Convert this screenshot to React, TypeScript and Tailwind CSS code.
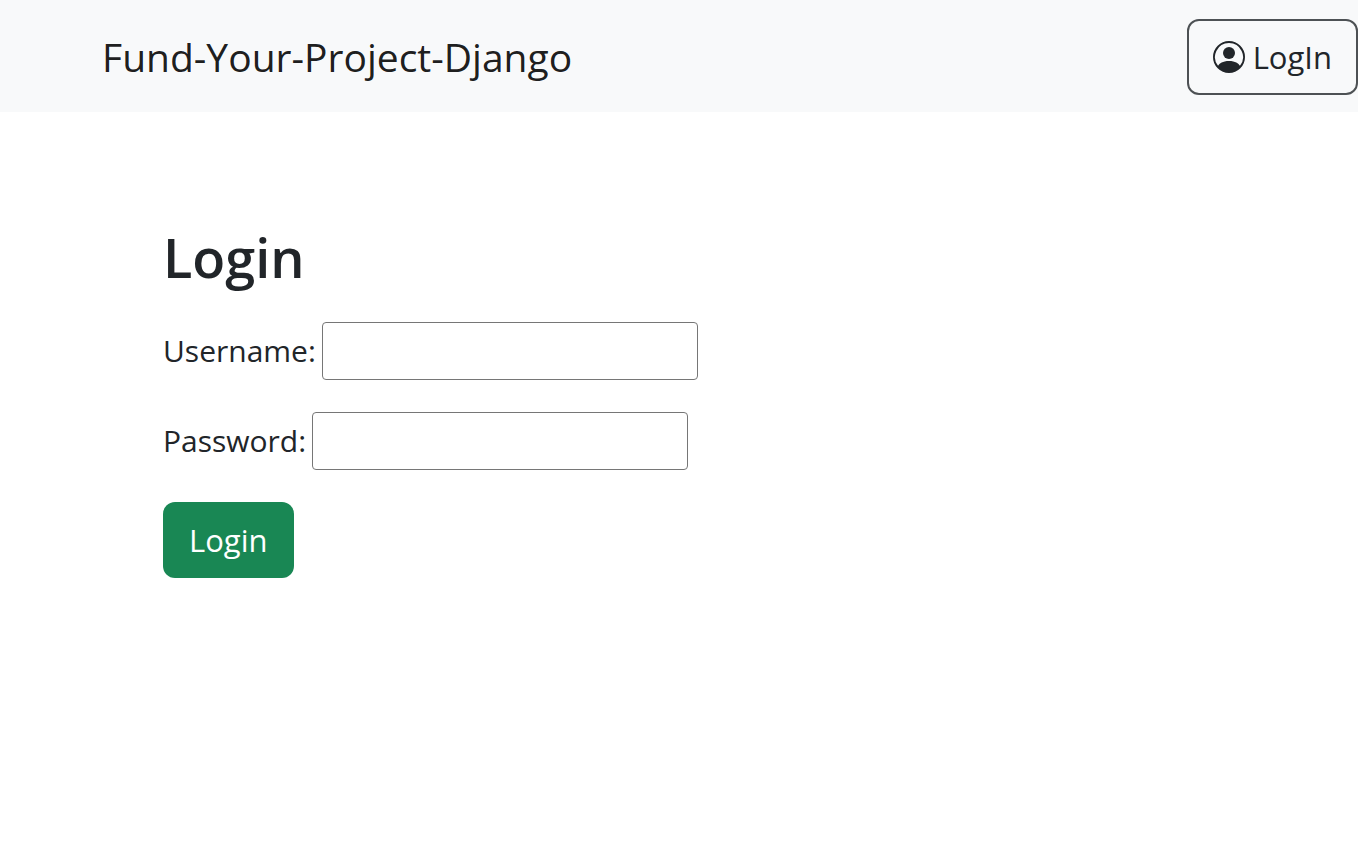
import { BsPersonCircle } from "react-icons/bs";

export default function App() {
  return (
    <div className="min-h-screen bg-white font-['Open_Sans',sans-serif] text-[30px] leading-[48px] text-[#212529]">
      <nav className="flex items-center justify-between bg-[#f8f9fa] pt-[19px] pb-[17px] pl-[102px]">
        <a href="#" className="text-[39px] leading-[60px] text-black/90">
          Fund-Your-Project-Django
        </a>
        <button
          type="button"
          className="flex items-center gap-2 rounded-xl border-2 border-[#4d5154] px-6 py-3 text-[31px] leading-[48px]"
        >
          <BsPersonCircle className="size-8" aria-hidden="true" />
          LogIn
        </button>
      </nav>
      <main className="px-[163px] pt-28">
        <h1 className="mb-8 text-[54px] leading-[66px] font-semibold">Login</h1>
        <form className="flex flex-col items-start gap-8" onSubmit={(e) => e.preventDefault()}>
          <div className="flex items-center gap-1.5">
            <label htmlFor="username">Username:</label>
            <input
              id="username"
              type="text"
              className="h-[58px] w-[376px] rounded border border-[#767676] bg-white px-1"
            />
          </div>
          <div className="flex items-center gap-1.5">
            <label htmlFor="password">Password:</label>
            <input
              id="password"
              type="password"
              className="h-[58px] w-[376px] rounded border border-[#767676] bg-white px-1"
            />
          </div>
          <button
            type="submit"
            className="rounded-xl bg-[#198754] px-[26px] py-[14px] text-[31px] leading-[48px] text-white"
          >
            Login
          </button>
        </form>
      </main>
    </div>
  );
}
